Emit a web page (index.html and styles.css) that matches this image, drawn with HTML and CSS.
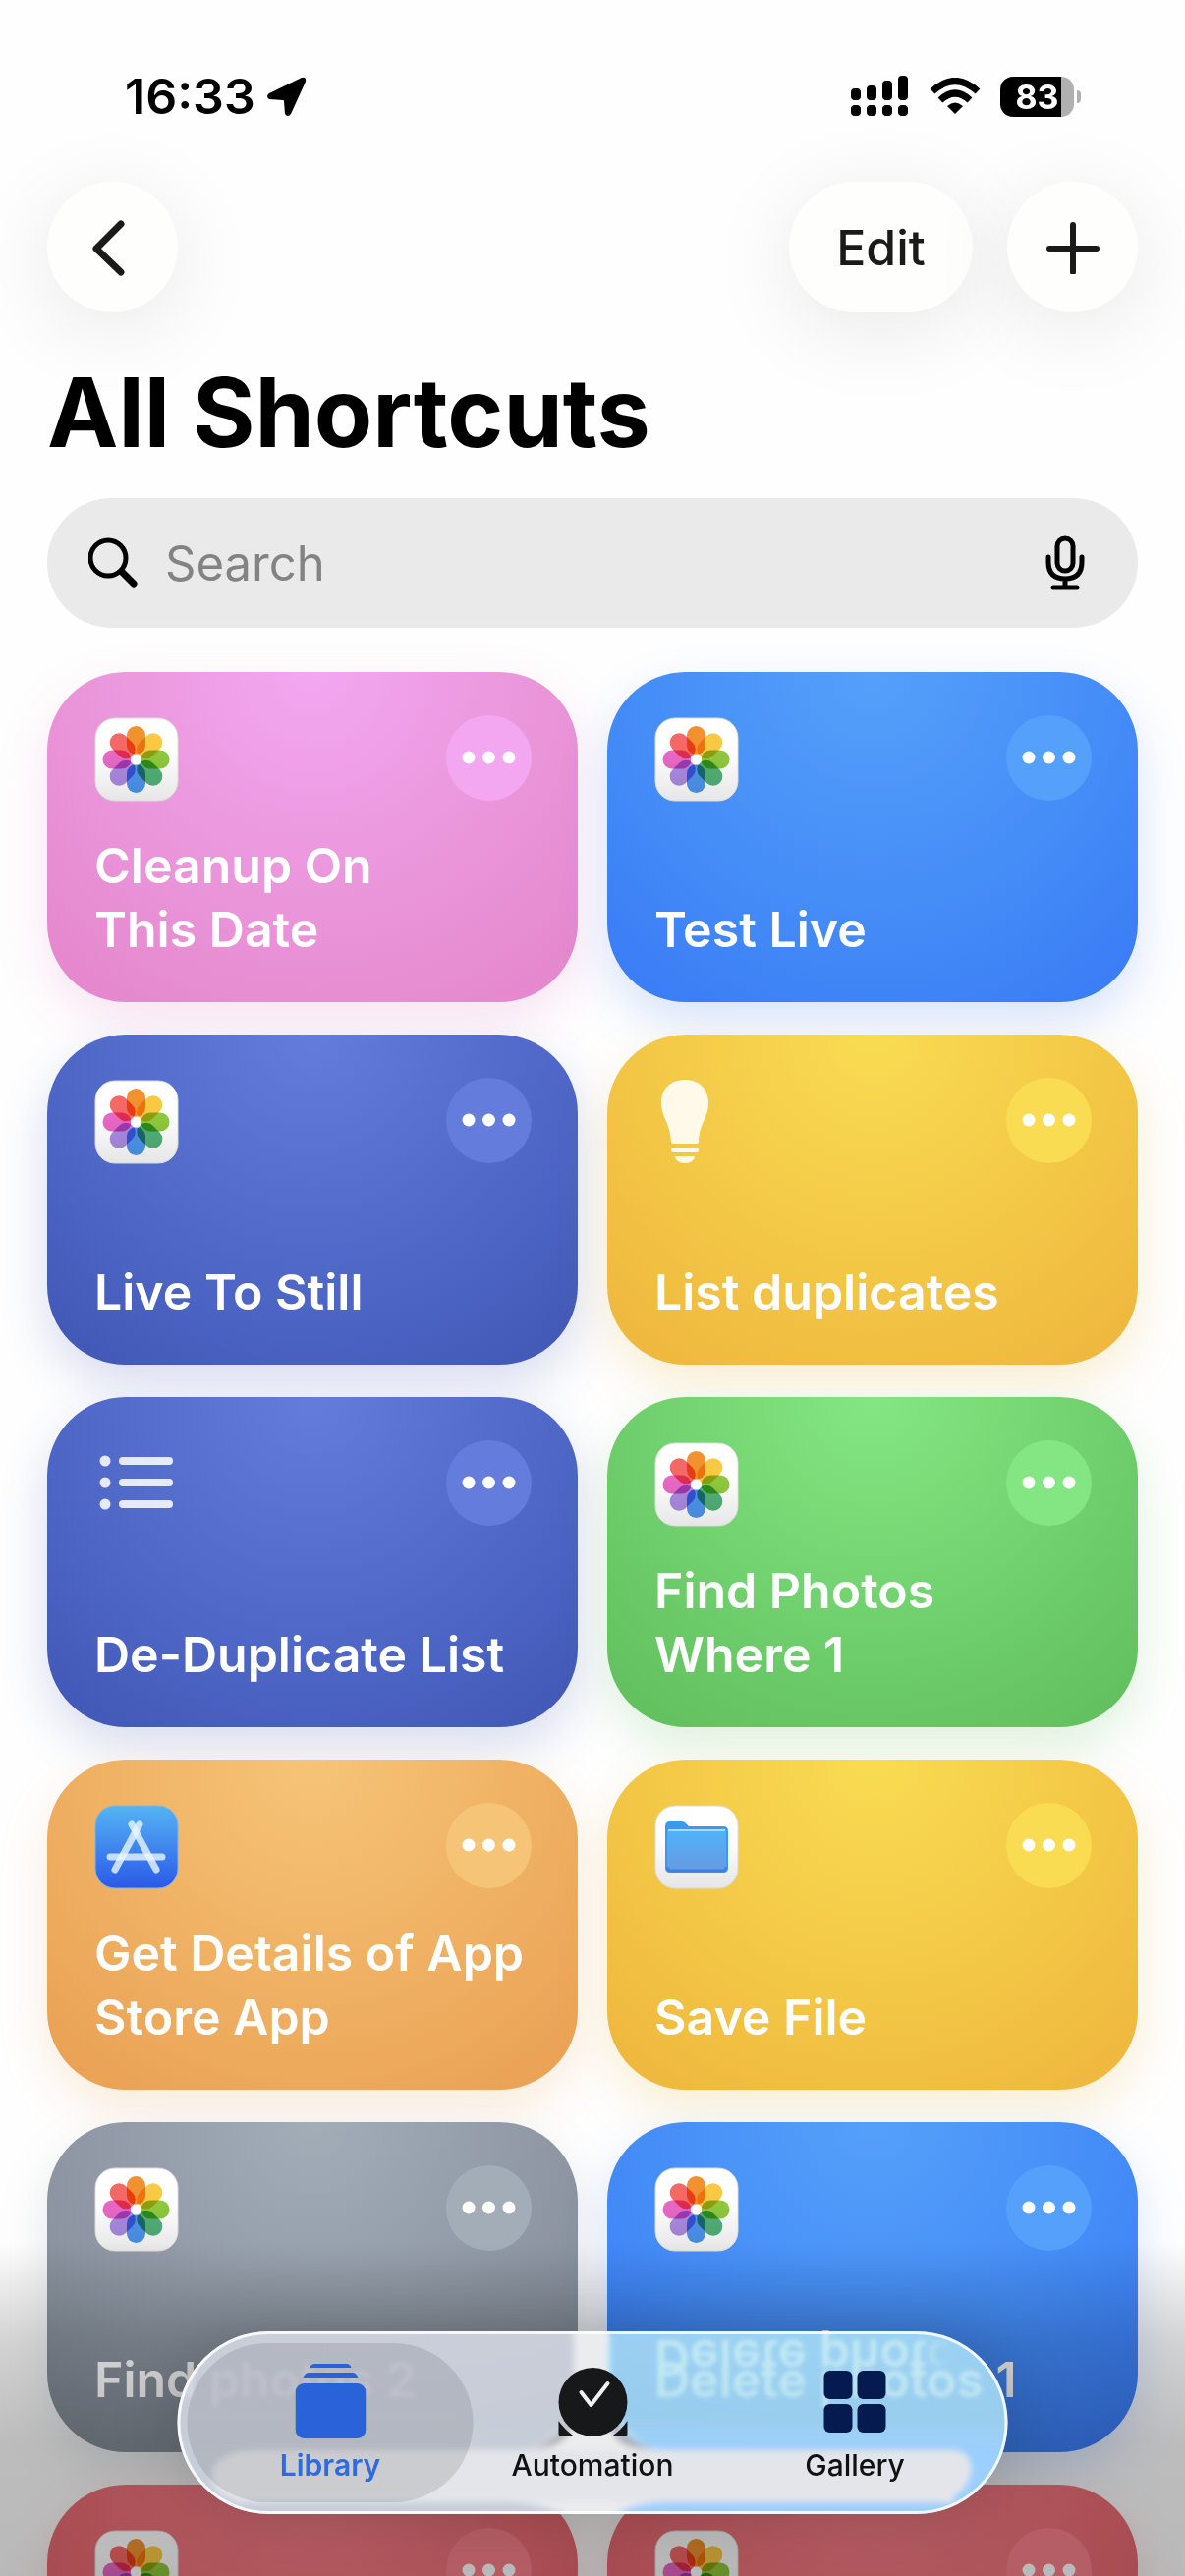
FILE: index.html
```html
<!DOCTYPE html>
<html lang="en">
<head>
    <meta charset="UTF-8">
    <meta name="viewport" content="width=device-width, initial-scale=1.0">
    <title>All Shortcuts</title>
    <link rel="stylesheet" href="styles.css">
</head>
<body>

    <!-- Shared icons -->
    <svg class="sprite" aria-hidden="true">
        <defs>
            <linearGradient id="white-tile" x1="0" y1="0" x2="0" y2="1">
                <stop offset="0.4" stop-color="#fff"/>
                <stop offset="1" stop-color="#e6e6e6"/>
            </linearGradient>
            <linearGradient id="blue-tile" x1="0" y1="0" x2="0" y2="1">
                <stop offset="0" stop-color="#55b4f3"/>
                <stop offset="1" stop-color="#2a59e8"/>
            </linearGradient>
            <linearGradient id="folder" x1="0" y1="0" x2="0" y2="1">
                <stop offset="0" stop-color="#4fb2f8"/>
                <stop offset="1" stop-color="#679be0"/>
            </linearGradient>
            <symbol id="photos" viewBox="0 0 86 86">
                <rect x="1" y="1" width="84" height="84" rx="20" fill="url(#white-tile)" stroke="#dcdcdc"/>
                <g class="petals">
                    <rect x="33" y="9" width="19" height="29" rx="9.500" fill="#f29130"/>
                    <rect x="33" y="9" width="19" height="29" rx="9.500" fill="#fac944" transform="rotate(45 42.500 43)"/>
                    <rect x="33" y="9" width="19" height="29" rx="9.500" fill="#8fc83c" transform="rotate(90 42.500 43)"/>
                    <rect x="33" y="9" width="19" height="29" rx="9.500" fill="#52b076" transform="rotate(135 42.500 43)"/>
                    <rect x="33" y="9" width="19" height="29" rx="9.500" fill="#4d95ee" transform="rotate(180 42.500 43)"/>
                    <rect x="33" y="9" width="19" height="29" rx="9.500" fill="#ab8be2" transform="rotate(225 42.500 43)"/>
                    <rect x="33" y="9" width="19" height="29" rx="9.500" fill="#e968c6" transform="rotate(270 42.500 43)"/>
                    <rect x="33" y="9" width="19" height="29" rx="9.500" fill="#f46866" transform="rotate(315 42.500 43)"/>
                </g>
                <circle cx="42.500" cy="43" r="5.500" fill="#fff"/>
            </symbol>
            <symbol id="appstore" viewBox="0 0 86 86">
                <rect x="1" y="1" width="84" height="84" rx="20" fill="url(#blue-tile)" stroke="#7db6ea"/>
                <g stroke-linecap="round" stroke-width="7" stroke="#e8f6ff" stroke-opacity="0.8">
                    <path d="M16 53H69"/>
                    <path d="M38 20L63 66"/>
                    <path d="M46 20L21 66"/>
                </g>
            </symbol>
            <symbol id="files" viewBox="0 0 86 86">
                <rect x="1" y="1" width="84" height="84" rx="20" fill="url(#white-tile)" stroke="#dcdcdc"/>
                <path d="M11 64V22q0-5 5-5h12q3 0 5 3l2 2h35q5 0 5 5v37q0 5-5 5H16q-5 0-5-5z" fill="#3d98f2"/>
                <path d="M13 26h60v37q0 4-4 4H17q-4 0-4-4z" fill="url(#folder)"/>
                <path d="M14 26h58" stroke="#a8dcff" stroke-width="2"/>
                <path d="M13 63q0 4 4 4h52q4 0 4-4" fill="none" stroke="#3f80e6" stroke-width="3"/>
            </symbol>
            <symbol id="bulb" viewBox="0 0 86 86">
                <g fill="#fff" fill-opacity="0.880">
                    <path d="M31 0C16 0 7 10 7 23c0 16 9 20 10 40q0 2 2 2h24q2 0 2-2c1-20 10-24 10-40C55 10 46 0 31 0z"/>
                    <rect x="17" y="69" width="28" height="5" rx="2"/>
                    <path d="M21 78h20q-1 7-10 7t-10-7z"/>
                </g>
            </symbol>
            <symbol id="list" viewBox="0 0 86 86">
                <g fill="#fff" fill-opacity="0.860">
                    <circle cx="11" cy="19" r="5.500"/>
                    <circle cx="11" cy="41" r="5.500"/>
                    <circle cx="11" cy="63" r="5.500"/>
                    <rect x="25" y="15" width="55" height="8" rx="4"/>
                    <rect x="25" y="37" width="55" height="8" rx="4"/>
                    <rect x="25" y="59" width="55" height="8" rx="4"/>
                </g>
            </symbol>
            <symbol id="dots" viewBox="0 0 87 87">
                <g fill="#fff">
                    <circle cx="23" cy="43" r="6.500"/>
                    <circle cx="43.500" cy="43" r="6.500"/>
                    <circle cx="64" cy="43" r="6.500"/>
                </g>
            </symbol>
        </defs>
    </svg>

    <div class="app">
        <div class="status-bar">
            <div class="status-left">
                <span class="time">16:33</span>
                <svg width="40" height="40" viewBox="0 0 40 40"><path d="M35 1L2 17q-4 3 0 6l14 1q1 0 1 1l1 13q3 4 6 0L39 5q1-5-4-4z"/></svg>
            </div>
            <div class="status-right">
                <svg width="60" height="42" viewBox="0 0 60 42">
                    <rect x="0" y="13" width="10" height="12" rx="4"/>
                    <rect x="16" y="10" width="10" height="15" rx="4"/>
                    <rect x="32" y="5" width="10" height="20" rx="4"/>
                    <rect x="48" y="0" width="10" height="25" rx="4"/>
                    <rect x="0" y="30" width="10" height="11" rx="4"/>
                    <rect x="16" y="30" width="10" height="11" rx="4"/>
                    <rect x="32" y="30" width="10" height="11" rx="4"/>
                    <rect x="48" y="30" width="10" height="11" rx="4"/>
                </svg>
                <svg width="52" height="38" viewBox="0 0 52 38">
                    <g fill="none" stroke="#000" stroke-width="7">
                        <path d="M3 14Q26-7 49 14"/>
                        <path d="M11 23Q26 9 41 23"/>
                    </g>
                    <path d="M26 37l-8-8q8-7 16 0z"/>
                </svg>
                <div class="battery"><span>83</span></div>
            </div>
        </div>

        <header class="toolbar">
            <button class="glass-btn round" aria-label="Back">
                <svg width="44" height="60" viewBox="0 0 44 60"><path d="M30 6L5 31l25 24" fill="none" stroke="#1a1a1a" stroke-width="7" stroke-linecap="round" stroke-linejoin="round"/></svg>
            </button>
            <div class="toolbar-right">
                <button class="glass-btn edit">Edit</button>
                <button class="glass-btn round" aria-label="Add">
                    <svg width="54" height="54" viewBox="0 0 54 54"><path d="M27 4v48M3 28h48" stroke="#1a1a1a" stroke-width="6" stroke-linecap="round"/></svg>
                </button>
            </div>
        </header>

        <h1>All Shortcuts</h1>

        <div class="search">
            <svg width="52" height="52" viewBox="0 0 52 52"><g fill="none" stroke="#000" stroke-linecap="round"><circle cx="20" cy="21" r="18" stroke-width="5"/><path d="M34 35l12 12" stroke-width="7"/></g></svg>
            <input type="text" placeholder="Search" aria-label="Search">
            <svg width="40" height="56" viewBox="0 0 40 56"><g fill="none" stroke="#000" stroke-width="5" stroke-linecap="round"><rect x="12" y="3" width="16" height="33" rx="8"/><path d="M3 22v5q0 17 17 17t17-17v-5M20 44v8M8 53h24"/></g></svg>
        </div>

        <main class="grid">
            <article class="card pink">
                <svg class="app-icon"><use href="#photos"/></svg>
                <button class="more" aria-label="More"><svg><use href="#dots"/></svg></button>
                <h2>Cleanup On<br>This Date</h2>
            </article>
            <article class="card blue">
                <svg class="app-icon"><use href="#photos"/></svg>
                <button class="more" aria-label="More"><svg><use href="#dots"/></svg></button>
                <h2>Test Live</h2>
            </article>
            <article class="card indigo">
                <svg class="app-icon"><use href="#photos"/></svg>
                <button class="more" aria-label="More"><svg><use href="#dots"/></svg></button>
                <h2>Live To Still</h2>
            </article>
            <article class="card yellow">
                <svg class="app-icon"><use href="#bulb"/></svg>
                <button class="more" aria-label="More"><svg><use href="#dots"/></svg></button>
                <h2>List duplicates</h2>
            </article>
            <article class="card indigo">
                <svg class="app-icon"><use href="#list"/></svg>
                <button class="more" aria-label="More"><svg><use href="#dots"/></svg></button>
                <h2>De-Duplicate List</h2>
            </article>
            <article class="card green">
                <svg class="app-icon"><use href="#photos"/></svg>
                <button class="more" aria-label="More"><svg><use href="#dots"/></svg></button>
                <h2>Find Photos<br>Where 1</h2>
            </article>
            <article class="card orange">
                <svg class="app-icon"><use href="#appstore"/></svg>
                <button class="more" aria-label="More"><svg><use href="#dots"/></svg></button>
                <h2>Get Details of App<br>Store App</h2>
            </article>
            <article class="card yellow">
                <svg class="app-icon"><use href="#files"/></svg>
                <button class="more" aria-label="More"><svg><use href="#dots"/></svg></button>
                <h2>Save File</h2>
            </article>
            <article class="card gray">
                <svg class="app-icon"><use href="#photos"/></svg>
                <button class="more" aria-label="More"><svg><use href="#dots"/></svg></button>
                <h2>Find photos 2</h2>
            </article>
            <article class="card blue">
                <svg class="app-icon"><use href="#photos"/></svg>
                <button class="more" aria-label="More"><svg><use href="#dots"/></svg></button>
                <h2 class="mirrored">Delete photos 1</h2>
            </article>
            <article class="card red">
                <svg class="app-icon"><use href="#photos"/></svg>
                <button class="more" aria-label="More"><svg><use href="#dots"/></svg></button>
            </article>
            <article class="card red">
                <svg class="app-icon"><use href="#photos"/></svg>
                <button class="more" aria-label="More"><svg><use href="#dots"/></svg></button>
            </article>
        </main>

        <div class="bottom-shade"></div>

        <nav class="tab-bar">
            <!-- Glass tint over the cards behind -->
            <svg class="glass" viewBox="0 0 845 186" aria-hidden="true">
                <defs>
                    <filter id="soft" x="-10%" y="-20%" width="120%" height="140%"><feGaussianBlur stdDeviation="3"/></filter>
                    <linearGradient id="tint-gray" gradientUnits="userSpaceOnUse" x1="0" y1="90" x2="0" y2="121">
                        <stop offset="0" stop-color="#d4dae5" stop-opacity="0.880"/>
                        <stop offset="1" stop-color="#c8ced9"/>
                    </linearGradient>
                    <linearGradient id="tint-blue" gradientUnits="userSpaceOnUse" x1="0" y1="90" x2="0" y2="121">
                        <stop offset="0" stop-color="#bdf0ff" stop-opacity="0.750"/>
                        <stop offset="1" stop-color="#9bcffd"/>
                    </linearGradient>
                </defs>
                <g filter="url(#soft)">
                    <path d="M402-9H440V90q0 30 40 30H860V200H-9V120H360q40 0 42-30z" fill="#ebecee"/>
                    <path d="M-9-9H395q12 4 10 30v30q-4 71-60 71H60V174H330q40 0 75 16H-9z" fill="url(#tint-gray)"/>
                    <path d="M860-9H455q-18 4-18 30v30q4 71 68 71H790V174H500q-40 0-60 16H860z" fill="url(#tint-blue)"/>
                    <path d="M80 121H790q18 3 18 20-6 33-45 33H80q-43 0-45-28 0-22 45-25z" fill="#e4e5ea"/>
                </g>
            </svg>
            <a href="#" class="tab active">
                <svg width="72" height="78" viewBox="0 0 72 78"><path d="M15 5q1-4 5-4h32q4 0 5 4zM8 15q2-5 6-5h44q4 0 6 5z"/><rect x="0" y="21" width="72" height="56" rx="9"/></svg>
                <span>Library</span>
            </a>
            <a href="#" class="tab">
                <svg width="72" height="78" viewBox="0 0 72 78">
                    <circle cx="36" cy="40" r="35"/>
                    <path d="M1 59q6 9 16 16H4q-3 0-3-3zM71 59q-6 9-16 16h13q3 0 3-3z"/>
                    <path d="M24 30l10 13 17-22" fill="none" stroke="#f2f2f2" stroke-width="4" stroke-linecap="round" stroke-linejoin="round"/>
                </svg>
                <span>Automation</span>
            </a>
            <a href="#" class="tab gallery">
                <svg width="72" height="78" viewBox="0 0 72 78">
                    <rect x="4" y="8" width="29" height="29" rx="6"/>
                    <rect x="38" y="8" width="29" height="29" rx="6"/>
                    <rect x="4" y="42" width="29" height="29" rx="6"/>
                    <rect x="38" y="42" width="29" height="29" rx="6"/>
                </svg>
                <span>Gallery</span>
            </a>
        </nav>
    </div>

</body>
</html>
```
FILE: styles.css
```css
* {
    margin: 0;
    padding: 0;
    box-sizing: border-box;
}

body {
    background-color: #fefefe;
    color: #000;
    font-family: Inter, "Liberation Sans", sans-serif;
}

button {
    border: none;
    font-family: inherit;
    cursor: pointer;
}

svg {
    display: block;
    flex-shrink: 0;
}

.sprite {
    position: absolute;
    width: 0;
    height: 0;
}

.petals rect {
    mix-blend-mode: multiply;
}

.app {
    position: relative;
    height: 100vh;
    padding: 0 48px;
    overflow: hidden;
}

/* Status bar */
.status-bar {
    display: flex;
    align-items: flex-end;
    justify-content: space-between;
    height: 126px;
    padding: 0 58px 0 79px;
}

.status-left,
.status-right {
    display: flex;
    align-items: center;
    height: 56px;
}

.status-left {
    gap: 12px;
}

.status-right {
    gap: 20px;
}

.time {
    font-size: 50px;
    font-weight: 600;
    line-height: 56px;
}

.battery {
    position: relative;
    width: 75px;
    height: 41px;
    margin-right: 7px;
    border-radius: 13px;
    background: linear-gradient(90deg, #000 62px, #b0b0b0 62px);
    color: #fff;
    font-size: 34px;
    font-weight: 700;
    line-height: 41px;
    text-align: center;
}

.battery::after {
    content: "";
    position: absolute;
    top: 14px;
    right: -7px;
    width: 4px;
    height: 13px;
    border-radius: 0 4px 4px 0;
    background: #b0b0b0;
}

/* Toolbar */
.toolbar {
    display: flex;
    justify-content: space-between;
    margin-top: 59px;
}

.toolbar-right {
    display: flex;
    gap: 35px;
}

.glass-btn {
    display: flex;
    align-items: center;
    justify-content: center;
    height: 133px;
    border-radius: 67px;
    background: #fefefd;
    color: #1a1a1a;
    font-size: 50px;
    font-weight: 500;
    box-shadow: 0 16px 90px rgba(0, 0, 0, 0.09);
}

.round {
    width: 133px;
}

.edit {
    width: 187px;
}

h1 {
    margin-top: 42px;
    font-size: 97px;
    font-weight: 700;
    line-height: 120px;
}

/* Search */
.search {
    display: flex;
    align-items: center;
    gap: 26px;
    height: 132px;
    margin-top: 27px;
    padding: 0 54px 0 42px;
    border-radius: 66px;
    background: #eaeaea;
}

.search input {
    flex: 1;
    min-width: 0;
    border: none;
    outline: none;
    background: none;
    font-family: inherit;
    font-size: 49px;
}

.search input::placeholder {
    color: #838383;
    opacity: 1;
}

/* Cards */
.grid {
    display: grid;
    grid-template-columns: 1fr 1fr;
    gap: 33px 30px;
    margin-top: 45px;
}

.card {
    display: grid;
    grid-template-columns: 1fr auto;
    grid-template-rows: 88px 1fr;
    height: 336px;
    padding: 44px 47px 41px 48px;
    border-radius: 80px;
    background: radial-gradient(circle at 50% 0, var(--light), var(--mid) 55%, var(--dark));
    box-shadow: 0 20px 50px var(--glow);
}

.app-icon {
    width: 86px;
    height: 86px;
    align-self: end;
}

.more {
    width: 87px;
    height: 87px;
    border-radius: 50%;
    background: var(--light);
}

.more svg {
    width: 87px;
    height: 87px;
}

.card h2 {
    grid-column: 1 / 3;
    align-self: end;
    justify-self: start;
    color: #fff;
    font-size: 50px;
    font-weight: 600;
    line-height: 65px;
    white-space: nowrap;
}

/* Bounce of the title in the upper rim of the tab bar */
.card .mirrored {
    -webkit-box-reflect: above -42px linear-gradient(90deg, #000 72%, transparent 82%);
}

.pink {
    --light: #f2a7f0;
    --mid: #ea95da;
    --dark: #e485ca;
    --glow: rgba(228, 133, 202, 0.22);
}

.blue {
    --light: #55a0fa;
    --mid: #458df7;
    --dark: #397af5;
    --glow: rgba(57, 122, 245, 0.2);
}

.indigo {
    --light: #647cdc;
    --mid: #5069c9;
    --dark: #4056b4;
    --glow: rgba(64, 86, 180, 0.2);
}

.yellow {
    --light: #f9dc52;
    --mid: #f3c746;
    --dark: #eeb53d;
    --glow: rgba(238, 181, 61, 0.22);
}

.green {
    --light: #84e682;
    --mid: #70d06d;
    --dark: #60bd5c;
    --glow: rgba(96, 189, 92, 0.2);
}

.orange {
    --light: #f6c477;
    --mid: #efb063;
    --dark: #e99f52;
    --glow: rgba(233, 159, 82, 0.2);
}

.gray {
    --light: #a3adb8;
    --mid: #8f98a4;
    --dark: #7f8892;
    --glow: rgba(127, 136, 146, 0.2);
}

.red {
    --light: #f8808a;
    --mid: #e96c74;
    --dark: #d85b63;
    --glow: rgba(216, 91, 99, 0.2);
}

/* Bottom */
.bottom-shade {
    position: absolute;
    left: 0;
    right: 0;
    bottom: 0;
    height: 340px;
    background: linear-gradient(rgba(0, 0, 0, 0), rgba(0, 0, 0, 0.17) 30%, rgba(0, 0, 0, 0.26) 60%, rgba(0, 0, 0, 0.27));
}

.tab-bar {
    position: absolute;
    left: 50%;
    bottom: 63px;
    display: grid;
    grid-template-columns: repeat(3, 1fr);
    width: 845px;
    height: 186px;
    padding: 0 22px;
    border-radius: 93px;
    transform: translateX(-50%);
    backdrop-filter: blur(2px);
    box-shadow: 0 0 70px rgba(0, 0, 0, 0.18);
}

.tab-bar::after {
    content: "";
    position: absolute;
    inset: 0;
    border: 3px solid rgba(255, 255, 255, 0.85);
    border-radius: 93px;
    pointer-events: none;
}

.glass {
    position: absolute;
    inset: 0;
    width: 100%;
    height: 100%;
    border-radius: 93px;
}

.tab {
    position: relative;
    display: flex;
    flex-direction: column;
    align-items: center;
    gap: 6px;
    padding-top: 32px;
    color: #111;
    fill: #16181a;
    font-size: 30px;
    font-weight: 500;
    line-height: 40px;
    text-decoration: none;
}

.tab svg,
.tab span {
    position: relative;
}

.active {
    color: #2f6be0;
    fill: #2a62da;
    font-weight: 600;
}

.active::before {
    content: "";
    position: absolute;
    inset: 12px -12px;
    border-radius: 81px;
    background: rgba(60, 62, 60, 0.15);
}

.gallery {
    fill: #051b50;
}
```
